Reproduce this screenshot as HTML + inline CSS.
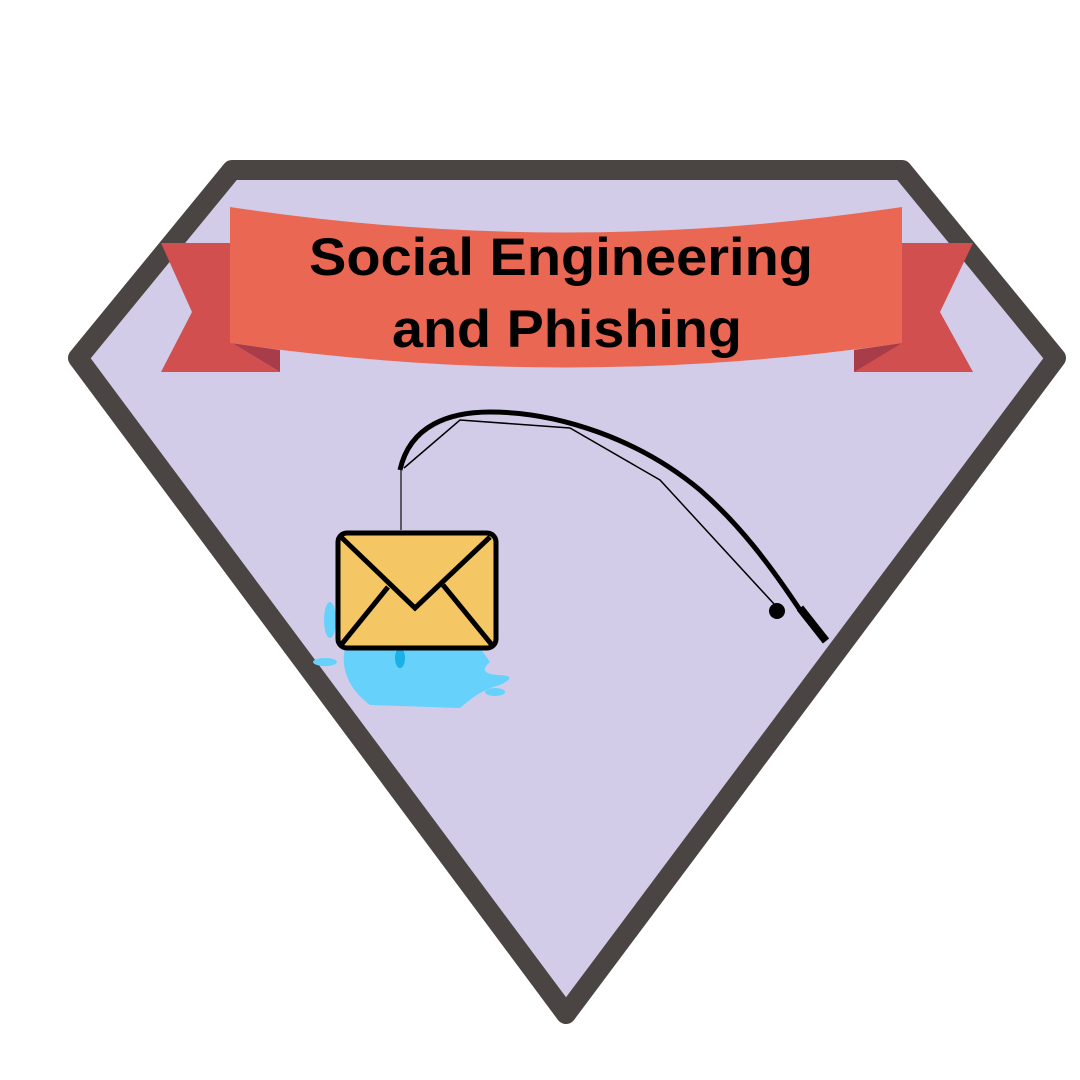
<!DOCTYPE html>
<html><head><style>
html,body{margin:0;padding:0;background:#fff;}
svg{display:block}
</style></head><body>
<svg width="1080" height="1080" viewBox="0 0 1080 1080" xmlns="http://www.w3.org/2000/svg">
<rect width="1080" height="1080" fill="#fff"/>
<polygon points="232,170 902,170 1056,358 566,1014 78,358" fill="#d2cce8" stroke="#4a4543" stroke-width="20" stroke-linejoin="round"/>
<!-- splash -->
<g fill="#66d2fc">
<path d="M345,648 C340,670 350,690 370,705 L460,708 C470,700 480,690 500,685 C510,680 515,676 500,675 C485,675 480,670 490,662 L480,648 Z"/>
<ellipse cx="330" cy="620" rx="6" ry="18"/>
<ellipse cx="325" cy="662" rx="12" ry="4"/>
<ellipse cx="495" cy="692" rx="10" ry="4"/>
</g>
<ellipse cx="400" cy="658" rx="5" ry="10" fill="#1ab0e8"/>
<!-- banner ribbons -->
<polygon points="161,243 232,243 232,372 161,372 192,312" fill="#d14f4f"/>
<polygon points="232,343 280,372 232,372" fill="#d14f4f"/>
<polygon points="232,343 280,372 280,350" fill="#a83c48"/>
<polygon points="973,243 902,243 902,372 973,372 940,312" fill="#d14f4f"/>
<polygon points="854,350 854,372 902,372 902,343" fill="#d14f4f"/>
<polygon points="902,343 854,372 854,350" fill="#a83c48"/>
<path d="M230,207 Q566,258 902,207 L902,343 Q566,392 230,343 Z" fill="#e96753"/>
<text x="561" y="275" text-anchor="middle" font-family="Liberation Sans, sans-serif" font-weight="bold" font-size="53" textLength="504" lengthAdjust="spacingAndGlyphs" fill="#000">Social Engineering</text>
<text x="567" y="347" text-anchor="middle" font-family="Liberation Sans, sans-serif" font-weight="bold" font-size="53" textLength="350" lengthAdjust="spacingAndGlyphs" fill="#000">and Phishing</text>
<!-- rod -->
<path d="M400,470 C410,425 450,412 490,412 C560,412 640,440 700,490 C740,525 770,565 800,610" fill="none" stroke="#000" stroke-width="5"/>
<path d="M404,468 L460,420 L570,428 L660,480 L775,605" fill="none" stroke="#000" stroke-width="1.5"/>
<line x1="800" y1="608" x2="826" y2="641" stroke="#000" stroke-width="8"/>
<circle cx="777" cy="611" r="8" fill="#000"/>
<line x1="401" y1="470" x2="401" y2="530" stroke="#333" stroke-width="1.5"/>
<!-- envelope -->
<rect x="338" y="533" width="158" height="115" rx="9" fill="#f4c664" stroke="#000" stroke-width="5"/>
<path d="M341,537 L415,608 L490,537" fill="none" stroke="#000" stroke-width="5"/>
<path d="M341,645 L388,587 M492,645 L443,585" fill="none" stroke="#000" stroke-width="5"/>
</svg>
</body></html>
